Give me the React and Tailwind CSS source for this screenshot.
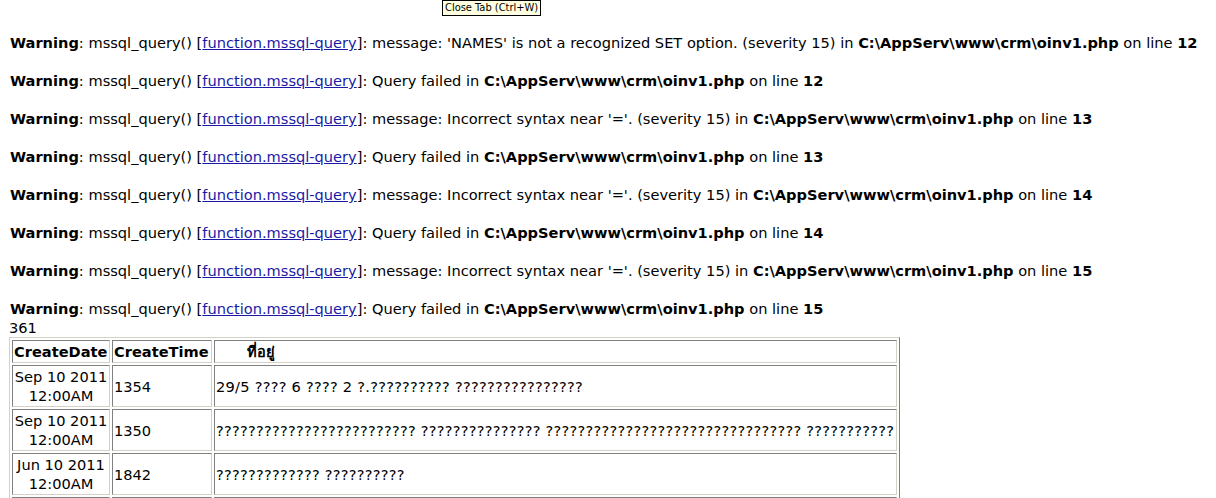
import React from 'react';

const FILE = 'C:\\AppServ\\www\\crm\\oinv1.php';

const warnings = [
    { msg: "message: 'NAMES' is not a recognized SET option. (severity 15) in ", line: 12 },
    { msg: 'Query failed in ', line: 12 },
    { msg: "message: Incorrect syntax near '='. (severity 15) in ", line: 13 },
    { msg: 'Query failed in ', line: 13 },
    { msg: "message: Incorrect syntax near '='. (severity 15) in ", line: 14 },
    { msg: 'Query failed in ', line: 14 },
    { msg: "message: Incorrect syntax near '='. (severity 15) in ", line: 15 },
    { msg: 'Query failed in ', line: 15 },
];

const rows = [
    { date: 'Sep 10 2011', time: '1354', addr: '29/5 ???? 6 ???? 2 ?.?????????? ????????????????' },
    { date: 'Sep 10 2011', time: '1350', addr: '????????????????????????? ??????????????? ???????????????????????????????? ???????????' },
    { date: 'Jun 10 2011', time: '1842', addr: '????????????? ??????????' },
];

const cell = 'border border-t-[#808080] border-l-[#808080] border-r-[#d4d0c8] border-b-[#d4d0c8] p-[1px]';

const App = () => {
    return (
        <div className="relative h-[498px] overflow-hidden bg-white text-black font-['DejaVu_Sans','Liberation_Sans',sans-serif] text-[14.6px] leading-[19px]">
            {/* browser tooltip */}
            <div className="absolute left-[442px] top-0 h-[16px] border border-black bg-[#ffffe1] px-[2px] text-[11px] leading-[14px] font-['DejaVu_Sans_Condensed','DejaVu_Sans',sans-serif]">
                Close Tab (Ctrl+W)
            </div>

            <div className="pt-[33px] pl-[10px] flex flex-col gap-[19px]">
                {warnings.map((w, i) => (
                    <div key={i} className="whitespace-nowrap">
                        <b>Warning</b>: mssql_query() [<a href="#" className="text-[#1a1aa6] underline">function.mssql-query</a>]: {w.msg}<b>{FILE}</b> on line <b>{w.line}</b>
                    </div>
                ))}
            </div>
            <div className="pl-[9px]">361</div>

            <table className="ml-[9px] w-[891px] table-fixed border-separate border-spacing-[2px] border border-t-[#d4d0c8] border-l-[#d4d0c8] border-r-[#808080] border-b-[#808080]">
                <thead>
                    <tr>
                        <th className={`${cell} w-[98px] text-left font-bold whitespace-nowrap`}>CreateDate</th>
                        <th className={`${cell} w-[100px] text-left font-bold whitespace-nowrap`}>CreateTime</th>
                        <th className={`${cell} text-left font-bold pl-[32px]`}>ที่อยู่</th>
                    </tr>
                </thead>
                <tbody>
                    {rows.map((r, i) => (
                        <tr key={i}>
                            <td className={`${cell} text-center whitespace-nowrap`}>{r.date}<br />12:00AM</td>
                            <td className={`${cell} align-middle`}>{r.time}</td>
                            <td className={`${cell} whitespace-nowrap tracking-[0.25px]`}>{r.addr}</td>
                        </tr>
                    ))}
                    <tr>
                        <td className={`${cell} h-[42px]`}></td>
                        <td className={`${cell} h-[42px]`}></td>
                        <td className={`${cell} h-[42px]`}></td>
                    </tr>
                </tbody>
            </table>
        </div>
    );
};

export default App;
